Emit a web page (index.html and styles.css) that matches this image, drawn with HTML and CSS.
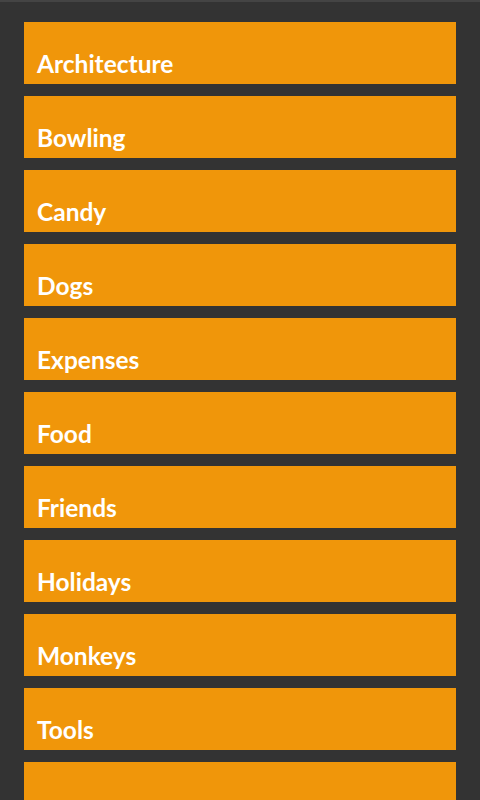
FILE: index.html
```html
<!DOCTYPE html>
<html>
<head>
<meta charset="utf-8">
<link rel="stylesheet" href="styles.css">
</head>
<body>
<div class="topline"></div>
<ul class="list">
<li class="item"><span class="label">Architecture</span></li>
<li class="item"><span class="label">Bowling</span></li>
<li class="item"><span class="label">Candy</span></li>
<li class="item"><span class="label">Dogs</span></li>
<li class="item"><span class="label">Expenses</span></li>
<li class="item"><span class="label">Food</span></li>
<li class="item"><span class="label">Friends</span></li>
<li class="item"><span class="label">Holidays</span></li>
<li class="item"><span class="label">Monkeys</span></li>
<li class="item"><span class="label">Tools</span></li>
<li class="item"><span class="label"></span></li>
</ul>
</body>
</html>
```
FILE: styles.css
```css
html, body {
  margin: 0;
  padding: 0;
  background: #333333;
  height: 800px;
  overflow: hidden;
}
.topline {
  height: 2px;
  background: #444444;
}
.list {
  list-style: none;
  margin: 0;
  padding: 20px 24px 0 24px;
  display: flex;
  flex-direction: column;
  gap: 12px;
}
.item {
  height: 62px;
  background: #F0960A;
  display: flex;
  align-items: flex-end;
  padding: 0 0 4px 13px;
  box-sizing: border-box;
}
.label {
  font-family: Lato, "Open Sans", sans-serif;
  font-weight: 700;
  font-size: 24.5px;
  line-height: 32px;
  color: #ffffff;
}
```
